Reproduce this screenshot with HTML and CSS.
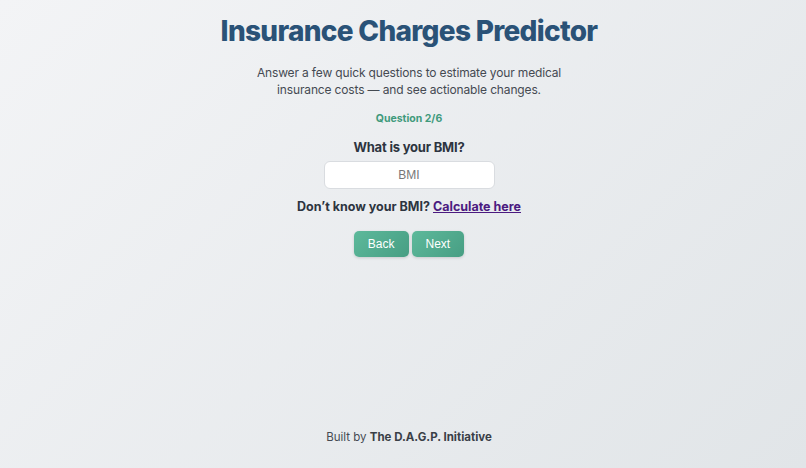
FILE: index.html
```html
<!DOCTYPE html>
<html lang="en">
<head>
    <meta charset="UTF-8">
    <meta name="viewport" content="width=device-width, initial-scale=1.0">
    <title>Insurance Charges Predictor</title>
    <link rel="stylesheet" href="styles.css">
</head>
<body>
    <main class="page">
        <h1 class="title">Insurance Charges Predictor</h1>
        <p class="intro">Answer a few quick questions to estimate your medical<br>insurance costs — and see actionable changes.</p>

        <!-- Question step -->
        <div class="step">Question 2/6</div>
        <label class="question" for="bmi">What is your BMI?</label>
        <input class="answer" type="text" id="bmi" placeholder="BMI">
        <p class="hint">Don’t know your BMI? <a href="#calc" class="hint-link">Calculate here</a></p>

        <div class="nav-buttons">
            <button class="nav-btn">Back</button>
            <button class="nav-btn">Next</button>
        </div>
    </main>

    <footer class="footer">
        Built by <strong>The D.A.G.P. Initiative</strong>
    </footer>
</body>
</html>
```

FILE: styles.css
```css
html, body {
    height: 100%;
}
body {
    margin: 0;
    padding-left: 12px;
    box-sizing: border-box;
    font-family: Inter, "Open Sans", sans-serif;
    background: linear-gradient(135deg, #f3f4f6 0%, #e1e5e8 100%);
    color: #2d3440;
    display: flex;
    flex-direction: column;
}
.page {
    flex: 1;
    display: flex;
    flex-direction: column;
    align-items: center;
    text-align: center;
}
.title {
    margin: 13px 0 0;
    font-size: 28px;
    font-weight: 800;
    letter-spacing: -0.7px;
    color: #2a5277;
    line-height: 36px;
}
.intro {
    margin: 15px 0 0;
    font-size: 12px;
    letter-spacing: -0.15px;
    line-height: 17px;
    color: #454a52;
}
.step {
    margin-top: 14px;
    font-size: 10.5px;
    line-height: 14px;
    font-weight: 700;
    color: #3f9a7c;
}
.question {
    margin-top: 12px;
    font-size: 13px;
    letter-spacing: -0.2px;
    line-height: 18px;
    font-weight: 700;
    color: #2d3440;
}
.answer {
    margin-top: 5px;
    width: 171px;
    height: 28px;
    box-sizing: border-box;
    border: 1px solid #d9dce0;
    border-radius: 6px;
    background: #fff;
    text-align: center;
    font-family: "Liberation Sans", Arial, sans-serif;
    font-size: 12px;
}
.answer::placeholder {
    color: #777;
}
.hint {
    margin: 9px 0 0;
    font-size: 12.5px;
    line-height: 18px;
    font-weight: 700;
    color: #2d3440;
}
.hint-link {
    color: #4b1a80;
}
.nav-buttons {
    margin-top: 15px;
    display: flex;
    gap: 3px;
}
.nav-btn {
    height: 26px;
    padding: 0 14px;
    border: none;
    border-radius: 5px;
    background: linear-gradient(135deg, #5db99b, #479e83);
    color: white;
    font-family: "Liberation Sans", Arial, sans-serif;
    font-size: 12px;
    box-shadow: 0 1px 3px rgba(0, 0, 0, 0.15);
    cursor: pointer;
}
.nav-btn:hover {
    background: #3f8f76;
}
.footer {
    text-align: center;
    font-size: 11.5px;
    line-height: 16px;
    color: #454a52;
    padding-bottom: 23px;
}
.footer strong {
    color: #3a3f47;
}
```
